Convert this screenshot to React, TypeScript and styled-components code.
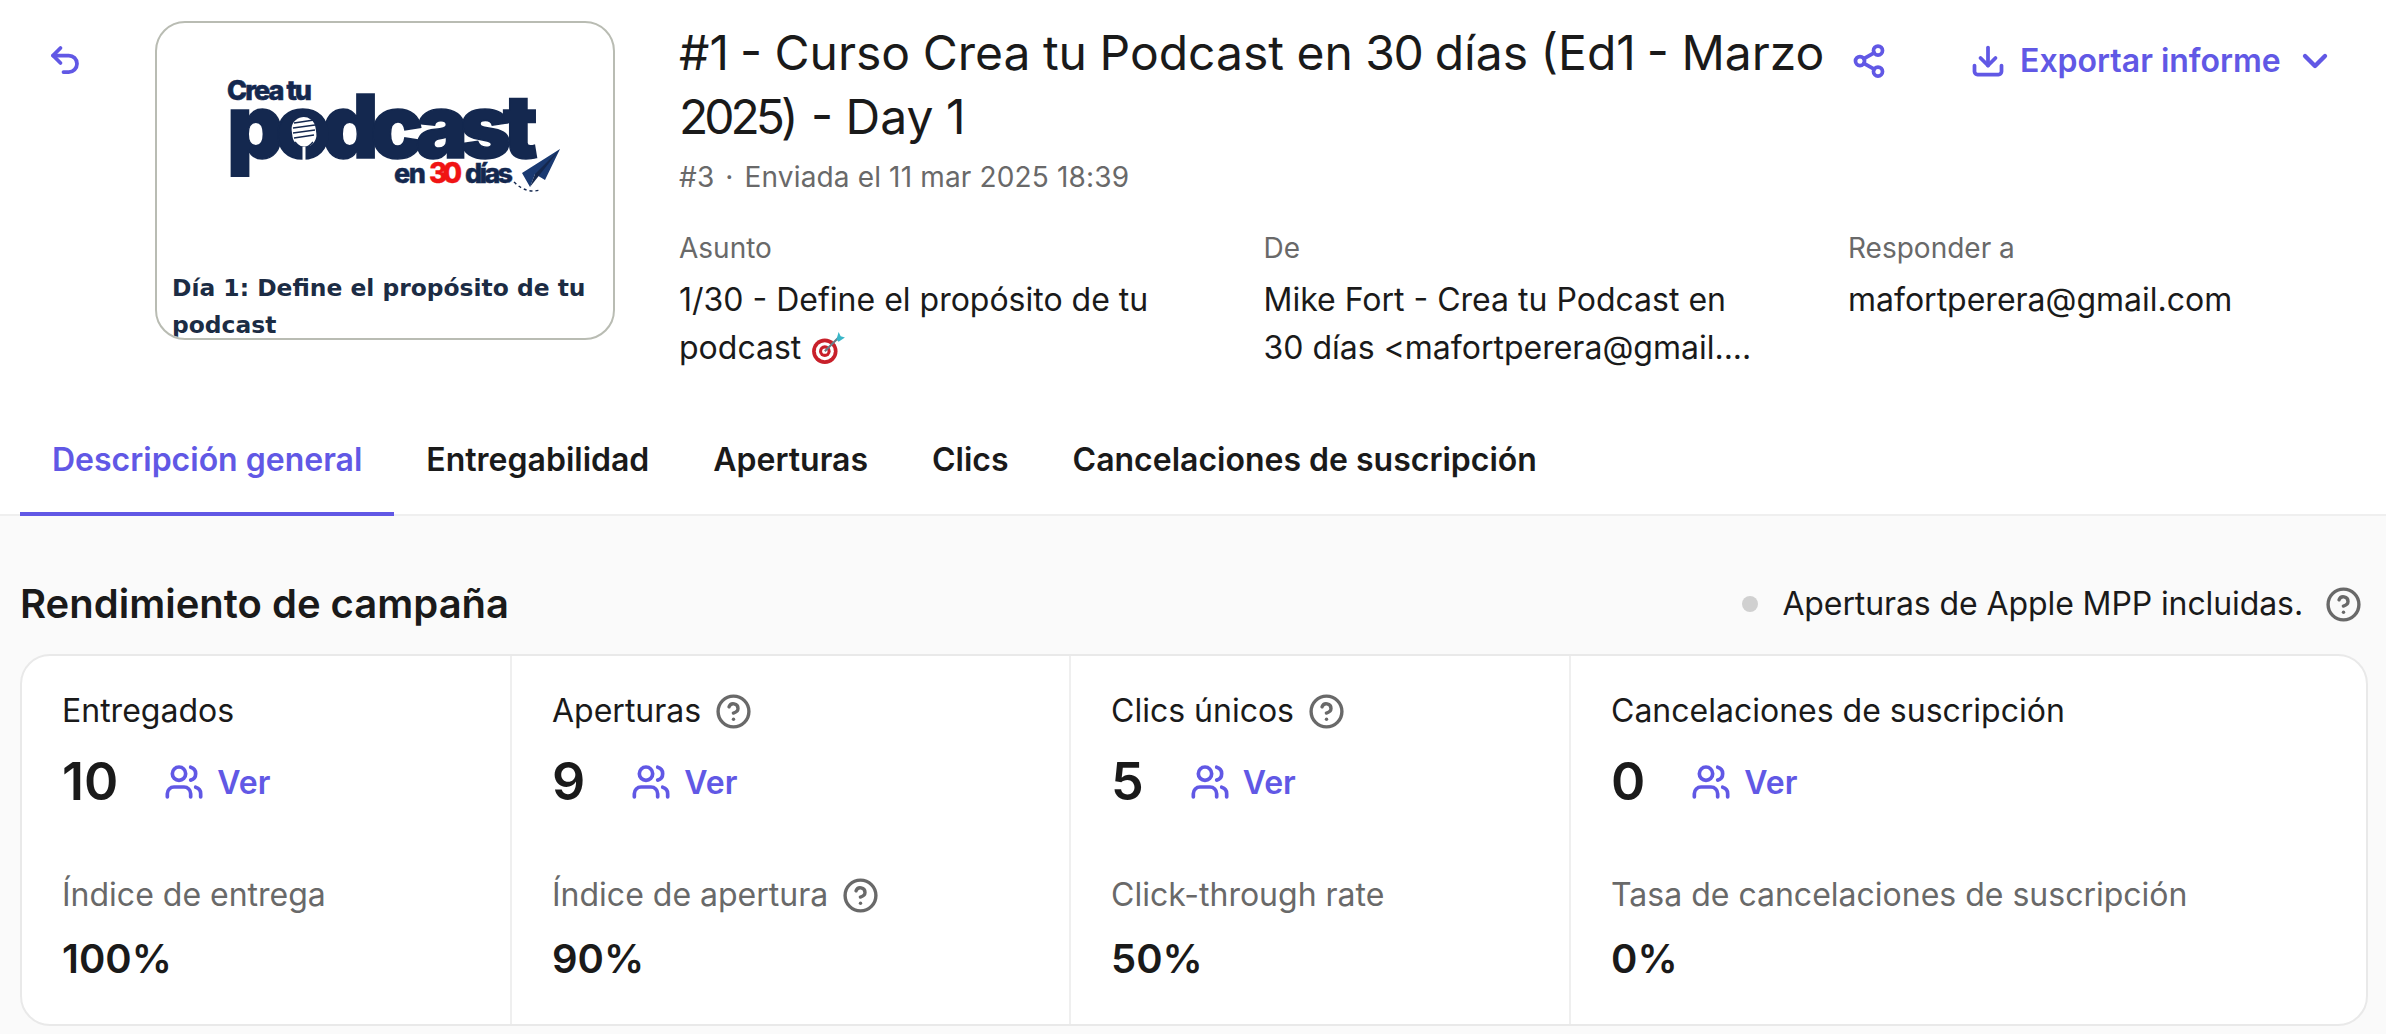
import React from "react";
import styled, { createGlobalStyle } from "styled-components";
import { Undo2, Share2, Download, ChevronDown, CircleHelp, Users } from "lucide-react";

const Global = createGlobalStyle`
  html, body { margin: 0; padding: 0; background: #fff; }
  body { font-family: Inter, "Noto Sans", sans-serif; color: #1a1a1a; overflow: hidden; }
  * { box-sizing: border-box; }
`;

const ACCENT = "#6158e5";

const Page = styled.div`
  width: 2386px;
  height: 1034px;
  display: flex;
  flex-direction: column;
  background: #fff;
`;
const Header = styled.header`
  display: flex;
  align-items: flex-start;
  height: 410px;
  padding: 21px 0 0 47px;
`;
const BackButton = styled.button`
  width: 108px;
  padding: 21px 0 0;
  border: 0;
  background: none;
  color: ${ACCENT};
  display: flex;
  flex: none;
`;
const Thumb = styled.div`
  width: 460px;
  height: 319px;
  flex: none;
  border: 2.5px solid #b9bcb3;
  border-radius: 30px;
  overflow: hidden;
  background: #fff;
  padding: 53px 0 0 68px;
`;
const LogoSvg = styled.svg`
  display: block;
  width: 340px;
  height: 120px;
  overflow: visible;
`;
const ThumbCaption = styled.div`
  margin: 74px 0 0 -53px;
  width: 430px;
  font: 700 23.4px/37px "DejaVu Sans", Verdana, sans-serif;
  color: #1c2c44;
`;
const Main = styled.div`
  flex: 1;
  padding-left: 64px;
  min-width: 0;
`;
const TopRow = styled.div`
  display: flex;
  align-items: flex-start;
`;
const TitleBlock = styled.div`
  width: 1170px;
  flex: none;
`;
const Title = styled.h1`
  margin: 0;
  font-size: 48px;
  font-weight: 400;
  line-height: 64px;
  word-spacing: -1px;
  color: #1a1a1a;
`;
const TitleDigits = styled.span<{ $squeeze: number }>`
  letter-spacing: ${(p) => p.$squeeze}px;
`;
const Meta = styled.div`
  margin-top: 8px;
  font-size: 28px;
  line-height: 40px;
  letter-spacing: 0.15px;
  color: #696969;
`;
const MetaDot = styled.span`
  margin: 0 11px;
`;
const IconLink = styled.button`
  border: 0;
  background: none;
  padding: 0;
  display: flex;
  color: ${ACCENT};
  margin: 22px 0 0 2px;
`;
const ExportButton = styled.button`
  display: flex;
  align-items: center;
  border: 0;
  background: none;
  padding: 0;
  margin: 16px 0 0 83px;
  height: 48px;
  color: ${ACCENT};
  font: 600 32px/48px Inter, sans-serif;
  gap: 14px;
  white-space: nowrap;
`;
const InfoGrid = styled.div`
  display: grid;
  grid-template-columns: 584.5px 584.5px 1fr;
  margin-top: 31px;
`;
const InfoLabel = styled.div`
  font-size: 28px;
  line-height: 40px;
  color: #696969;
`;
const InfoValue = styled.div`
  margin-top: 8px;
  width: 490px;
  font-size: 32px;
  line-height: 48px;
  color: #1a1a1a;
  overflow-wrap: anywhere;
`;
const EmojiSvg = styled.svg`
  width: 36px;
  height: 36px;
  vertical-align: -7px;
`;
const Tabs = styled.nav`
  display: flex;
  height: 106px;
  padding-left: 20px;
  border-bottom: 2px solid #efefef;
`;
const Tab = styled.div<{ $active?: boolean }>`
  height: 106px;
  padding: 0 32px;
  font-size: 32px;
  font-weight: 600;
  line-height: 100px;
  color: ${(p) => (p.$active ? ACCENT : "#1a1a1a")};
  border-bottom: 4px solid ${(p) => (p.$active ? ACCENT : "transparent")};
`;
const Section = styled.section`
  flex: 1;
  background: #fafafa;
  padding: 0 18px 0 20px;
`;
const SectionHead = styled.div`
  display: flex;
  align-items: center;
  justify-content: space-between;
  height: 138px;
  padding-top: 38px;
`;
const SectionTitle = styled.h2`
  margin: 0;
  font-size: 40px;
  font-weight: 600;
  line-height: 56px;
`;
const MppNote = styled.div`
  display: flex;
  align-items: center;
  font-size: 32px;
  line-height: 48px;
  letter-spacing: -0.1px;
  padding-right: 6px;
`;
const MppDot = styled.span`
  width: 16px;
  height: 16px;
  border-radius: 50%;
  background: #d0d0d0;
  margin-right: 24px;
`;
const HelpIcon = styled(CircleHelp)`
  color: #696969;
  flex: none;
`;
const MppHelp = styled(HelpIcon)`
  margin-left: 22px;
`;
const StatsCard = styled.div`
  display: grid;
  grid-template-columns: 488px 559px 500px 1fr;
  height: 372px;
  background: #fff;
  border: 2px solid #e9e9e9;
  border-radius: 30px;
  overflow: hidden;
`;
const StatCell = styled.div`
  padding: 31px 0 0 40px;
  border-left: 2px solid #efefef;
  &:first-child { border-left: 0; }
`;
const StatLabel = styled.div`
  display: flex;
  align-items: center;
  gap: 14px;
  font-size: 32px;
  line-height: 48px;
  height: 48px;
  color: #1a1a1a;
`;
const StatMain = styled.div`
  display: flex;
  align-items: center;
  height: 64px;
  margin-top: 15px;
`;
const StatNumber = styled.span`
  font-size: 52px;
  font-weight: 600;
  line-height: 64px;
  margin-right: 46px;
`;
const ViewLink = styled.span`
  display: flex;
  align-items: center;
  gap: 13px;
  color: ${ACCENT};
  font-size: 32px;
  font-weight: 600;
`;
const RateLabel = styled(StatLabel)`
  margin-top: 57px;
  color: #696969;
`;
const RateValue = styled.div`
  margin-top: 16px;
  font-size: 40px;
  font-weight: 600;
  line-height: 48px;
`;

const Logo = () => (
  <LogoSvg viewBox="0 0 340 120">
    <text x="2" y="24" fontFamily="Inter" fontWeight="800" fontSize="27" fill="#14284f" stroke="#14284f" strokeWidth="0.6" textLength="85" lengthAdjust="spacing">Crea tu</text>
    <text x="2" y="82" fontFamily="Inter" fontWeight="900" fontSize="88" fill="#14284f" stroke="#14284f" strokeWidth="1.5" textLength="311" lengthAdjust="spacing">podcast</text>
    <circle cx="79" cy="58" r="25" fill="#14284f" />
    <rect x="67" y="41" width="24" height="30" rx="12" fill="#fff" transform="rotate(-8 79 56)" />
    <path d="M69 47l20-3M68 52l22-3M68 57l22-3M69 62l20-3" stroke="#14284f" strokeWidth="1.5" />
    <path d="M70 66q9 11 18 0" fill="none" stroke="#14284f" strokeWidth="1.4" />
    <path d="M79 71v13" stroke="#fff" strokeWidth="3" />
    <text x="169" y="107" fontFamily="Inter" fontWeight="800" fontSize="27" fill="#14284f" stroke="#14284f" strokeWidth="0.4" textLength="32" lengthAdjust="spacing">en</text>
    <text x="204" y="107" fontFamily="Inter" fontWeight="800" fontSize="28" fill="#f01414" stroke="#f01414" strokeWidth="0.4" textLength="33" lengthAdjust="spacing">30</text>
    <text x="240" y="107" fontFamily="Inter" fontWeight="800" fontSize="27" fill="#14284f" stroke="#14284f" strokeWidth="0.4" textLength="48" lengthAdjust="spacing">días</text>
    <path d="M297 97L335 73L320 104L310 98L305 111Z" fill="#1a3a72" />
    <path d="M335 73L305 111L310 98Z" fill="#14284f" />
    <path d="M289 106q12 12 26 8" fill="none" stroke="#14284f" strokeWidth="1.4" strokeDasharray="3 3" />
  </LogoSvg>
);

const Dart = () => (
  <EmojiSvg viewBox="0 0 34 34">
    <circle cx="14" cy="20" r="12" fill="#c8202a" />
    <circle cx="14" cy="20" r="8.5" fill="#fff" />
    <circle cx="14" cy="20" r="5.5" fill="#c8202a" />
    <circle cx="14" cy="20" r="2.5" fill="#fff" />
    <path d="M14 20L27 7" stroke="#6b7b86" strokeWidth="2" />
    <path d="M25 9l2-7 2 4 4 1-6 4z" fill="#39b6c8" />
  </EmojiSvg>
);

const stats = [
  { label: "Entregados", help: false, value: "10", rate: "Índice de entrega", rateHelp: false, pct: "100%" },
  { label: "Aperturas", help: true, value: "9", rate: "Índice de apertura", rateHelp: true, pct: "90%" },
  { label: "Clics únicos", help: true, value: "5", rate: "Click-through rate", rateHelp: false, pct: "50%" },
  { label: "Cancelaciones de suscripción", help: false, value: "0", rate: "Tasa de cancelaciones de suscripción", rateHelp: false, pct: "0%" },
];

export default function App() {
  return (
    <Page>
      <Global />
      <Header>
        <BackButton aria-label="Volver"><Undo2 size={36} strokeWidth={2.5} /></BackButton>
        <Thumb>
          <Logo />
          <ThumbCaption>Día 1: Define el propósito de tu podcast</ThumbCaption>
        </Thumb>
        <Main>
          <TopRow>
            <TitleBlock>
              <Title>
                #<TitleDigits $squeeze={-1.5}>1</TitleDigits> - Curso Crea tu Podcast en <TitleDigits $squeeze={-1.5}>30</TitleDigits> días (Ed<TitleDigits $squeeze={-1.5}>1</TitleDigits> - Marzo <TitleDigits $squeeze={-4}>2025</TitleDigits>) - Day <TitleDigits $squeeze={-4}>1</TitleDigits>
              </Title>
              <Meta>#3<MetaDot>·</MetaDot>Enviada el 11 mar 2025 18:39</Meta>
            </TitleBlock>
            <IconLink aria-label="Compartir"><Share2 size={36} strokeWidth={2.5} /></IconLink>
            <ExportButton>
              <Download size={36} strokeWidth={2.5} />
              Exportar informe
              <ChevronDown size={40} strokeWidth={2.6} />
            </ExportButton>
          </TopRow>
          <InfoGrid>
            <div>
              <InfoLabel>Asunto</InfoLabel>
              <InfoValue>1/30 - Define el propósito de tu podcast <Dart /></InfoValue>
            </div>
            <div>
              <InfoLabel>De</InfoLabel>
              <InfoValue>Mike Fort - Crea tu Podcast en 30 días &lt;mafortperera@gmail....</InfoValue>
            </div>
            <div>
              <InfoLabel>Responder a</InfoLabel>
              <InfoValue>mafortperera@gmail.com</InfoValue>
            </div>
          </InfoGrid>
        </Main>
      </Header>
      <Tabs>
        <Tab $active>Descripción general</Tab>
        <Tab>Entregabilidad</Tab>
        <Tab>Aperturas</Tab>
        <Tab>Clics</Tab>
        <Tab>Cancelaciones de suscripción</Tab>
      </Tabs>
      <Section>
        <SectionHead>
          <SectionTitle>Rendimiento de campaña</SectionTitle>
          <MppNote>
            <MppDot />
            Aperturas de Apple MPP incluidas.
            <MppHelp size={37} strokeWidth={2.2} />
          </MppNote>
        </SectionHead>
        <StatsCard>
          {stats.map((s) => (
            <StatCell key={s.label}>
              <StatLabel>{s.label}{s.help && <HelpIcon size={37} strokeWidth={2.2} />}</StatLabel>
              <StatMain>
                <StatNumber>{s.value}</StatNumber>
                <ViewLink><Users size={40} strokeWidth={2.2} />Ver</ViewLink>
              </StatMain>
              <RateLabel>{s.rate}{s.rateHelp && <HelpIcon size={37} strokeWidth={2.2} />}</RateLabel>
              <RateValue>{s.pct}</RateValue>
            </StatCell>
          ))}
        </StatsCard>
      </Section>
    </Page>
  );
}
